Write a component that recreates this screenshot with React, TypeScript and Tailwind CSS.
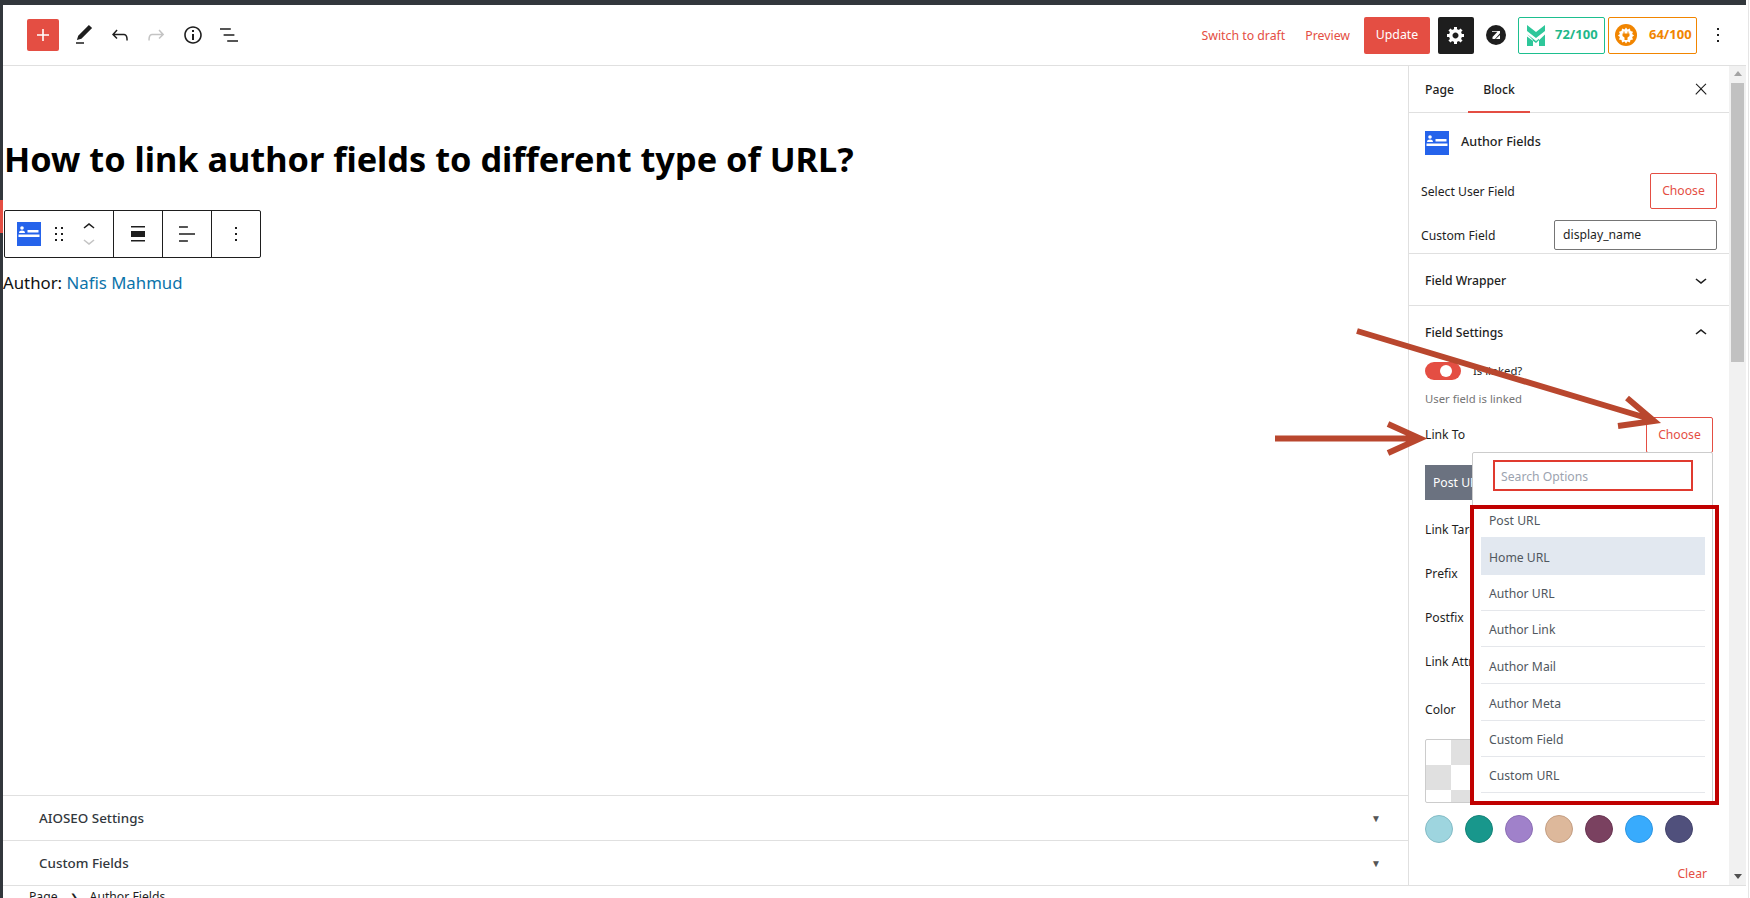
import React from "react";

const F = "[font-family:'Noto_Sans',sans-serif]";

function Ic({ d, size = 24, vb = 24, className = "" }: { d: string; size?: number; vb?: number; className?: string }) {
  return (
    <svg width={size} height={size} viewBox={`0 0 ${vb} ${vb}`} className={className} fill="currentColor">
      <path d={d} />
    </svg>
  );
}

const P = {
  plus: "M18 11.2h-5.2V6h-1.6v5.2H6v1.6h5.2V18h1.6v-5.2H18z",
  undo: "M18.3 11.7c-.6-.6-1.4-.9-2.3-.9H6.7l2.9-3.3-1.1-1-4.5 5L8.5 16l1-1-2.7-2.7H16c.5 0 .9.2 1.3.5 1 1 1 3.4 1 4.5v.3h1.5v-.2c0-1.5 0-4.3-1.5-5.7z",
  redo: "M15.6 6.5l-1.1 1 2.9 3.3H8c-.9 0-1.7.3-2.3.9-1.4 1.5-1.4 4.2-1.4 5.6v.2h1.5v-.3c0-1.1 0-3.5 1-4.5.3-.3.7-.5 1.3-.5h9.2L14.5 15l1.1 1.1 4.6-4.6-4.6-5z",
  info: "M12 3.2c-4.8 0-8.8 3.9-8.8 8.8 0 4.8 3.9 8.8 8.8 8.8 4.8 0 8.8-3.9 8.8-8.8 0-4.8-4-8.8-8.8-8.8zm0 16c-4 0-7.2-3.3-7.2-7.2C4.8 8 8 4.8 12 4.8s7.2 3.3 7.2 7.2c0 4-3.2 7.2-7.2 7.2zM11 17h2v-6h-2v6zm0-8h2V7h-2v2z",
  list: "M13.8 5.2H3v1.5h10.8V5.2zm-3.6 12v1.5H21v-1.5H10.2zm7.2-6H6.6v1.5h10.8v-1.5z",
  pen: "M20.1 5.1 16.9 2 6.2 12.7l-1.3 4.4 4.5-1.3L20.1 5.1zM4 20.8h8v-1.5H4v1.5z",
  more: "M13 19h-2v-2h2v2zm0-6h-2v-2h2v2zm0-6h-2V5h2v2z",
  close: "M13 11.8l6.1-6.3-1-1-6.1 6.2-6.1-6.2-1 1 6.1 6.3-6.5 6.7 1 1 6.5-6.6 6.5 6.6 1-1z",
  down: "M17.5 11.6L12 16l-5.5-4.4.9-1.2L12 14l4.5-3.6 1 1.2z",
  up: "M6.5 12.4L12 8l5.5 4.4-.9 1.2L12 10l-4.5 3.6-1-1.2z",
  drag: "M8 7h2V5H8v2zm0 6h2v-2H8v2zm0 6h2v-2H8v2zm6-14v2h2V5h-2zm0 8h2v-2h-2v2zm0 6h2v-2h-2v2z",
  left: "M4 19.8h8.9v-1.5H4v1.5zm8.9-15.6H4v1.5h8.9V4.2zm-8.9 7v1.5h16v-1.5H4z",
  wide: "M5 5.5h14V4H5v1.5zM5 9h14v6H5V9zm0 10.5h14V18H5v1.5z",
  gear: "M18 12h-2.18c-.17.7-.44 1.35-.81 1.93l1.54 1.54-2.1 2.1-1.54-1.54c-.58.36-1.23.63-1.91.79V19H8v-2.18c-.68-.16-1.33-.43-1.91-.79l-1.54 1.54-2.12-2.12 1.54-1.54c-.36-.58-.63-1.23-.79-1.91H1V9.03h2.17c.16-.7.44-1.35.8-1.94L2.43 5.55l2.1-2.1 1.54 1.54c.58-.37 1.24-.64 1.93-.81V2h3v2.18c.68.16 1.33.43 1.91.79l1.54-1.54 2.12 2.12-1.54 1.54c.36.59.64 1.24.8 1.94H18V12zm-8.5 1.5c1.66 0 3-1.34 3-3s-1.34-3-3-3-3 1.34-3 3 1.34 3 3 3z",
};

function AuthorIcon() {
  return (
    <svg width="24" height="24" viewBox="0 0 24 24" className="shrink-0">
      <rect width="24" height="24" fill="#2563eb" />
      <circle cx="5" cy="6" r="1.8" fill="#fff" />
      <path d="M2 11c0-2 1.5-2.6 3-2.6S8 9 8 11zM10.5 8h11v2.6h-11zM1.500 12.500h21v2.6h-21z" fill="#fff" />
    </svg>
  );
}

function Row({ label, y }: { label: string; y: string }) {
  return <div className={`${y} text-[12.2px] leading-[18px] text-[#1e1e1e]`}>{label}</div>;
}

const options = [
  { t: "Post URL", h: "h-[36px]", b: "" },
  { t: "Home URL", h: "h-[38px]", b: "bg-[#e2e8f0]" },
  { t: "Author URL", h: "h-[36px]", b: "border-b border-[#e5e7eb]" },
  { t: "Author Link", h: "h-[36px]", b: "border-b border-[#e5e7eb]" },
  { t: "Author Mail", h: "h-[37px]", b: "border-b border-[#e5e7eb]" },
  { t: "Author Meta", h: "h-[37px]", b: "border-b border-[#e5e7eb]" },
  { t: "Custom Field", h: "h-[36px]", b: "border-b border-[#e5e7eb]" },
  { t: "Custom URL", h: "h-[36px]", b: "border-b border-[#e5e7eb]" },
];

const swatches = ["bg-[#9ed5df]", "bg-[#18978c]", "bg-[#a081ca]", "bg-[#ddb89b]", "bg-[#7a4160]", "bg-[#38abfd]", "bg-[#50507c]"];
const swatchBorders = ["border-[#84bcc6]", "border-[#148378]", "border-[#8c6fb5]", "border-[#c49f83]", "border-[#693552]", "border-[#2e96e2]", "border-[#45456c]"];

export default function App() {
  return (
    <div className={`${F} relative flex h-[898px] w-[1750px] flex-col overflow-hidden bg-white text-[#1e1e1e]`}>
      <div className="flex flex-1 min-h-0">
        <div className="relative w-[3px] shrink-0 bg-[#32373c]">
          <div className="absolute left-0 top-[200px] h-[33px] w-[3px] bg-[#e44e43]" />
        </div>
        <div className="flex w-[1743px] shrink-0 flex-col">
          <div className="h-[5px] shrink-0 bg-[#32373c]" />
          {/* Header */}
          <header className="flex h-[61px] shrink-0 items-center border-b border-[#e0e0e0] pl-[24px] pr-[16px]">
            <button className="flex h-[32px] w-[32px] items-center justify-center rounded-[2px] bg-[#e44e43] text-white">
              <Ic d={P.plus} />
            </button>
            <Ic d={P.pen} className="ml-[13px]" />
            <Ic d={P.undo} className="ml-[12px]" />
            <Ic d={P.redo} className="ml-[12px] text-[#c4c4c4]" />
            <Ic d={P.info} className="ml-[13px]" />
            <Ic d={P.list} className="ml-[12px]" />
            <div className="flex-1" />
            <span className="pt-[3px] text-[12.3px] text-[#e44e43]">Switch to draft</span>
            <span className="ml-[20px] pt-[3px] text-[12.3px] text-[#e44e43]">Preview</span>
            <button className="ml-[14px] flex h-[37px] w-[66px] items-center justify-center rounded-[2px] bg-[#e44e43] text-[12.3px] text-white">
              Update
            </button>
            <div className="ml-[8px] flex h-[37px] w-[36px] items-center justify-center rounded-[2px] bg-[#1e1e1e] text-white">
              <Ic d={P.gear} size={20} vb={20} />
            </div>
            <svg width="20" height="20" viewBox="0 0 20 20" className="ml-[12px]">
              <circle cx="10" cy="10" r="10" fill="#1e1e1e" />
              <path d="M6 6h8v2.200L9 14H6.500v-2l5-5.300H6zM14 10v4H9.800z" fill="#fff" />
            </svg>
            <div className="ml-[12px] flex h-[37px] w-[87px] items-center rounded-[2px] border border-[#1dbf8f] pl-[8px] text-[13px] font-bold text-[#1fb88a]">
              <svg width="18" height="21" viewBox="0 0 18 21">
                <path d="M0 0 9 7 18 0v6l-9 7-9-7z" fill="#2ec79a" />
                <path d="M0 9l9 7 3-2.300V21h6V9.500L9 18 0 11.500V21h6v-6z" fill="#2ec79a" />
              </svg>
              <span className="ml-[10px]">72/100</span>
            </div>
            <div className="ml-[3px] flex h-[37px] w-[89px] items-center rounded-[2px] border border-[#f18500] pl-[6px] text-[13px] font-bold text-[#f18500]">
              <svg width="22" height="22" viewBox="0 0 22 22">
                <circle cx="11" cy="11" r="11" fill="#f18500" />
                <path d="M11 3.500l1.500 2 2.400-.9.600 2.500 2.500.6-.9 2.400 2 1.400-2 1.500.9 2.400-2.500.6-.6 2.500-2.400-.9-1.500 2-1.500-2-2.400.9-.6-2.500-2.500-.6.9-2.400-2-1.500 2-1.400-.9-2.400 2.500-.6.6-2.500 2.400.9z" fill="#fff" />
                <path d="M8.500 7.500h1v2h3v-2h1v2h1v2.500l-2 1.600V16h-3v-2.400l-2-1.600V9.500h1z" fill="#f18500" />
              </svg>
              <span className="ml-[12px]">64/100</span>
            </div>
            <Ic d={P.more} className="ml-[9px]" />
          </header>

          <div className="flex min-h-0 flex-1">
            {/* Editor */}
            <main className="flex min-w-0 flex-1 flex-col">
              <div className="min-h-0 flex-1 pt-[73px]">
                <h1 className="pl-[1px] text-[34.3px] font-bold leading-[40px] text-black">How to link author fields to different type of URL?</h1>
                <div className="ml-[1px] mt-[31px] flex h-[48px] w-[257px] items-stretch rounded-[2px] border border-[#1e1e1e]">
                  <div className="flex w-[109px] items-center border-r border-[#1e1e1e] pl-[12px]">
                    <AuthorIcon />
                    <Ic d={P.drag} size={24} className="ml-[6px]" />
                    <div className="ml-[6px] flex flex-col">
                      <Ic d={P.up} size={24} className="-mb-[5px]" />
                      <Ic d={P.down} size={24} className="-mt-[5px] text-[#c4c4c4]" />
                    </div>
                  </div>
                  <div className="flex w-[49px] items-center justify-center border-r border-[#1e1e1e]">
                    <Ic d={P.wide} />
                  </div>
                  <div className="flex w-[49px] items-center justify-center border-r border-[#1e1e1e]">
                    <Ic d={P.left} />
                  </div>
                  <div className="flex flex-1 items-center justify-center">
                    <Ic d={P.more} />
                  </div>
                </div>
                <p className="mt-[12px] text-[16.8px] leading-[26px] text-[#111]">
                  Author: <span className="text-[#0b73aa]">Nafis Mahmud</span>
                </p>
              </div>
              <div className="flex h-[45px] shrink-0 items-center justify-between border-t border-[#e0e0e0] pl-[36px] pr-[27px] pt-[1px] text-[13.4px] font-medium text-[#32373c]">
                AIOSEO Settings
                <span className="text-[10px] text-[#555]">▼</span>
              </div>
              <div className="flex h-[45px] shrink-0 items-center justify-between border-t border-[#e0e0e0] pl-[36px] pr-[27px] pt-[1px] text-[13.4px] font-medium text-[#32373c]">
                Custom Fields
                <span className="text-[10px] text-[#555]">▼</span>
              </div>
            </main>

            {/* Sidebar */}
            <aside className="w-[321px] shrink-0 overflow-hidden border-l border-[#e0e0e0]">
              <div className="flex h-[47px] items-stretch border-b border-[#e0e0e0] text-[12.2px] font-medium">
                <div className="flex w-[59px] items-center pl-[16px] pt-[3px]">Page</div>
                <div className="flex w-[62px] items-center justify-center border-b-2 border-[#e44e43] -mb-px pt-[3px]">Block</div>
                <div className="flex-1" />
                <div className="flex w-[37px] items-center text-[#1e1e1e]"><Ic d={P.close} size={18} /></div>
              </div>
              <div className="flex items-center pl-[16px] pt-[18px] text-[12.6px] font-medium leading-[18px]">
                <AuthorIcon />
                <span className="ml-[12px] -mt-[2px]">Author Fields</span>
              </div>
              <div className="mt-[18px] flex items-center justify-between pl-[12px] pr-[12px] text-[12.2px]">
                <span className="pt-[2px]">Select User Field</span>
                <span className="flex h-[36px] w-[67px] items-center justify-center rounded-[2px] border border-[#e44e43] pt-[1px] text-[#e44e43]">Choose</span>
              </div>
              <div className="mt-[11px] flex h-[34px] items-start justify-between border-b border-[#e0e0e0] pl-[12px] pr-[12px] text-[12.2px]">
                <span className="mt-[7px]">Custom Field</span>
                <span className="flex h-[30px] w-[163px] items-center rounded-[2px] border border-[#757575] pl-[8px]">display_name</span>
              </div>
              <div className="flex h-[52px] items-center justify-between border-b border-[#e0e0e0] pl-[16px] pr-[16px] text-[12.2px] font-medium">
                <span className="pt-[3px]">Field Wrapper</span>
                <Ic d={P.down} />
              </div>
              <div className="pl-[16px] pr-[16px]">
                <div className="flex h-[53px] items-center justify-between text-[12.2px] font-medium">
                  <span className="pt-[2px]">Field Settings</span>
                  <Ic d={P.up} />
                </div>
                <div className="mt-[3px] flex items-center text-[11.3px]">
                  <span className="relative h-[18px] w-[36px] rounded-full bg-[#e44e43]">
                    <span className="absolute right-[9px] top-[3px] h-[12px] w-[12px] rounded-full bg-white" />
                  </span>
                  <span className="ml-[12px]">Is linked?</span>
                </div>
                <div className="mt-[11px] text-[11.3px] leading-[16px] text-[#757575]">User field is linked</div>
                <div className="mt-[10px] flex items-center justify-between text-[12.2px]">
                  <span>Link To</span>
                  <span className="flex h-[36px] w-[67px] items-center justify-center rounded-[2px] border border-[#e44e43] text-[#e44e43]">Choose</span>
                </div>
                <div className="mt-[12px] flex h-[35px] w-[100px] items-center bg-[#6b7280] pl-[8px] pt-[1px] text-[12.2px] text-white">Post URL</div>
                <Row label="Link Target" y="mt-[21px]" />
                <Row label="Prefix" y="mt-[26px]" />
                <Row label="Postfix" y="mt-[26px]" />
                <Row label="Link Attribute" y="mt-[26px]" />
                <Row label="Color" y="mt-[30px]" />
                <div className="mt-[20px] grid h-[64px] w-[284px] grid-cols-[25px_25px_25px_25px] grid-rows-[25px_25px_14px] overflow-hidden rounded-[2px] border border-[#ccc]">
                  <div /><div className="bg-[#e0e0e0]" /><div /><div className="bg-[#e0e0e0]" />
                  <div className="bg-[#e0e0e0]" /><div /><div className="bg-[#e0e0e0]" /><div />
                  <div /><div className="bg-[#e0e0e0]" /><div /><div className="bg-[#e0e0e0]" />
                </div>
                <div className="mt-[12px] flex gap-[12px]">
                  {swatches.map((s, i) => (
                    <span key={s} className={`h-[28px] w-[28px] rounded-full border ${s} ${swatchBorders[i]}`} />
                  ))}
                </div>
                <div className="mt-[22px] pr-[6px] text-right text-[12.2px] text-[#e44e43]">Clear</div>
              </div>
            </aside>

            {/* Scrollbar */}
            <div className="flex w-[17px] shrink-0 flex-col items-center bg-[#f1f1f1] pt-[5px]">
              <span className="h-0 w-0 border-x-[4px] border-b-[5px] border-x-transparent border-b-[#a3a3a3]" />
              <span className="mt-[7px] h-[279px] w-[13px] bg-[#c1c1c1]" />
              <div className="flex-1" />
              <span className="mb-[6px] h-0 w-0 border-x-[4px] border-t-[5px] border-x-transparent border-t-[#505050]" />
            </div>
          </div>

          {/* Breadcrumb */}
          <div className="flex h-[13px] shrink-0 items-start gap-[12px] overflow-hidden border-t border-[#e0e0e0] pl-[26px] pt-[2px] text-[12.2px] leading-[18px] text-[#1e1e1e]">
            <span>Page</span>
            <span className="text-[10px]">❯</span>
            <span>Author Fields</span>
          </div>
        </div>
        <div className="w-[4px] shrink-0 bg-white">
          <div className="ml-[2px] h-full w-px bg-[#e5e5e5]" />
        </div>
      </div>

      {/* Dropdown popover */}
      <div className="absolute left-[1472px] top-[452px] h-[353px] w-[241px] rounded-[2px] border border-[#ccc] bg-white">
        <div className="ml-[20px] mt-[7px] flex h-[31px] w-[200px] items-center border-2 border-[#e03a2f] pl-[6px] pt-[3px] text-[12.2px] text-[#9ca3af]">Search Options</div>
        <div className="ml-[8px] mr-[7px] mt-[10px]">
          {options.map((o) => (
            <div key={o.t} className={`flex items-center pl-[8px] pt-[4px] text-[12.2px] text-[#50575e] ${o.h} ${o.b}`}>{o.t}</div>
          ))}
        </div>
      </div>

      {/* Annotation frame */}
      <div className="pointer-events-none absolute left-[1470px] top-[505px] h-[300px] w-[249px] border-4 border-[#c00000]" />

      {/* Annotation arrows */}
      <svg className="pointer-events-none absolute left-0 top-0" width="1750" height="898" fill="none" stroke="#b9472e" strokeWidth="6">
        <path d="M1357 331 1650 419M1627 398 1654 421 1618 426" />
        <path d="M1275 438.500H1416M1388 424 1420 438.500 1388 453" />
      </svg>
    </div>
  );
}
